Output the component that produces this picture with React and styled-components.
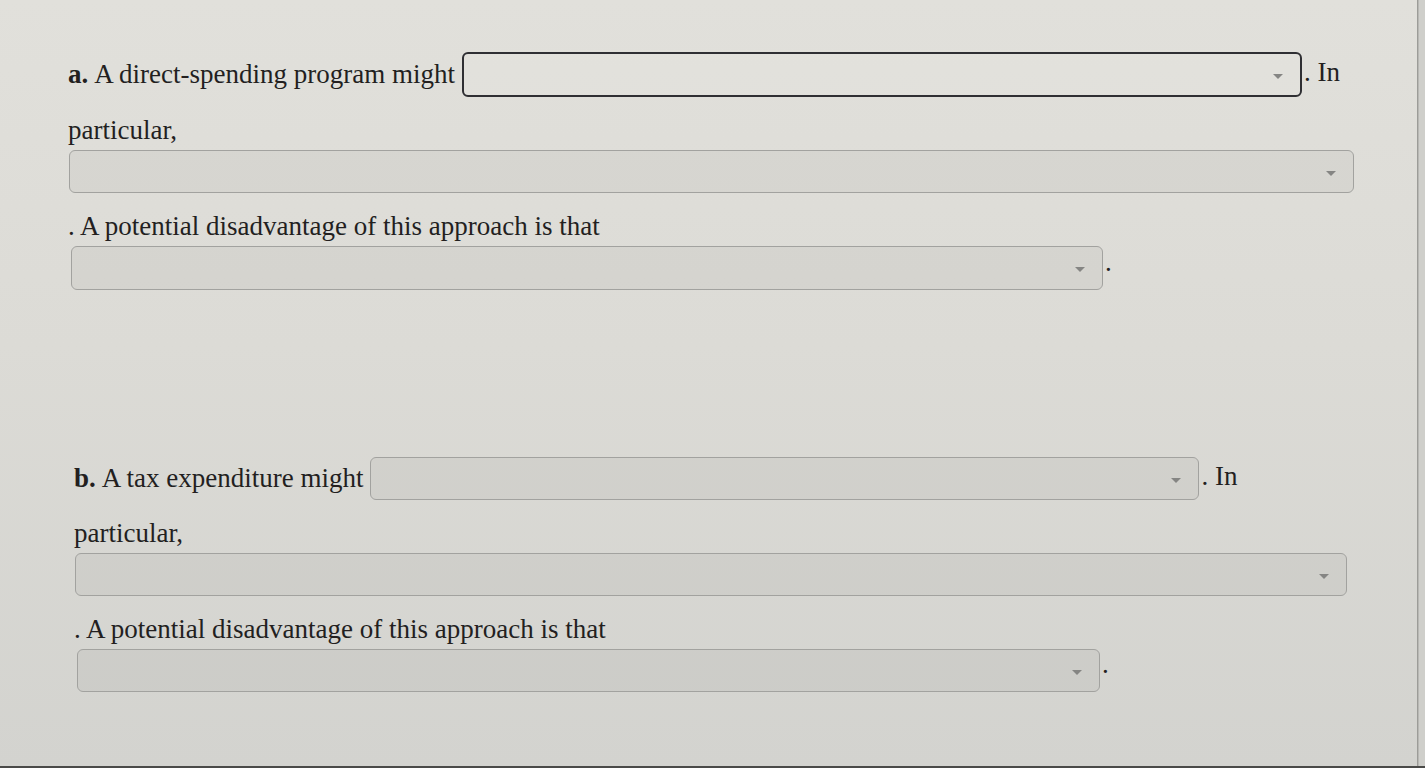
import React from "react";
import styled, { createGlobalStyle } from "styled-components";

const GlobalStyle = createGlobalStyle`
  html, body {
    margin: 0;
    padding: 0;
    background: #d6d6d1;
  }
  body {
    font-family: "Liberation Serif", "Times New Roman", serif;
    color: #231f1f;
  }
`;

const Page = styled.div`
  display: flex;
  width: 1425px;
  height: 768px;
  overflow: hidden;
  background: linear-gradient(180deg, #e1e0db 0%, #dcdbd6 45%, #d3d3cf 100%);
  border-bottom: 2px solid #4a4a48;
  box-sizing: border-box;
`;

const Content = styled.div`
  flex: 1;
  display: flex;
  flex-direction: column;
  gap: 167px;
  padding-top: 52px;
  border-right: 1px solid #9c9c98;
`;

const Edge = styled.div`
  width: 6px;
  background: #cfcfcb;
  border-left: 1px solid #b8b8b4;
`;

const Section = styled.section`
  display: flex;
  flex-direction: column;
  padding-left: ${(p) => p.$indent}px;
  font-size: 27px;
`;

const Row = styled.div`
  display: flex;
  align-items: center;
  height: ${(p) => p.$h}px;
  white-space: nowrap;
`;

const Bold = styled.b`
  font-weight: 700;
  margin-right: 6px;
`;

const Lead = styled.span`
  margin-right: 7px;
`;

const Trail = styled.span`
  margin-left: 2px;
  margin-top: -4px;
`;

const Dot = styled.span`
  margin-left: 2px;
  line-height: 1;
  padding-bottom: 12px;
`;

const TextLine = styled.div`
  line-height: 30px;
  padding: 18px 0 5px;
  white-space: nowrap;
`;

const SelectBox = styled.div`
  position: relative;
  flex: none;
  box-sizing: border-box;
  width: ${(p) => p.$w}px;
  height: ${(p) => p.$h}px;
  margin-left: ${(p) => p.$x || 0}px;
  border: ${(p) => (p.$focus ? "2px solid #2f2f33" : "1px solid #a2a29f")};
  border-radius: 6px;
  background: ${(p) => (p.$focus ? "rgba(255,255,255,0.08)" : "rgba(0,0,0,0.035)")};
`;

const Caret = styled.span`
  position: absolute;
  right: 17px;
  top: 50%;
  margin-top: -1px;
  width: 0;
  height: 0;
  border-left: 5px solid transparent;
  border-right: 5px solid transparent;
  border-top: 5px solid #858583;
`;

const Select = ({ w, h, x, focus }) => (
  <SelectBox $w={w} $h={h} $x={x} $focus={focus}>
    <Caret />
  </SelectBox>
);

const SelectRow = styled.div`
  display: flex;
  align-items: center;
`;

const Part = ({ indent, letter, lead, first, second, third }) => (
  <Section $indent={indent}>
    <Row $h={first.h}>
      <Bold>{letter}</Bold>
      <Lead>{lead}</Lead>
      <Select w={first.w} h={first.h} focus={first.focus} />
      <Trail>. In</Trail>
    </Row>
    <TextLine>particular,</TextLine>
    <SelectRow>
      <Select w={second.w} h={second.h} x={1} />
    </SelectRow>
    <TextLine>. A potential disadvantage of this approach is that</TextLine>
    <SelectRow>
      <Select w={third.w} h={third.h} x={3} />
      <Dot>.</Dot>
    </SelectRow>
  </Section>
);

export default function App() {
  return (
    <>
      <GlobalStyle />
      <Page>
        <Content>
          <Part
            indent={68}
            letter="a."
            lead="A direct-spending program might"
            first={{ w: 840, h: 45, focus: true }}
            second={{ w: 1285, h: 43 }}
            third={{ w: 1032, h: 44 }}
          />
          <Part
            indent={74}
            letter="b."
            lead="A tax expenditure might"
            first={{ w: 829, h: 43 }}
            second={{ w: 1272, h: 43 }}
            third={{ w: 1023, h: 43 }}
          />
        </Content>
        <Edge />
      </Page>
    </>
  );
}
